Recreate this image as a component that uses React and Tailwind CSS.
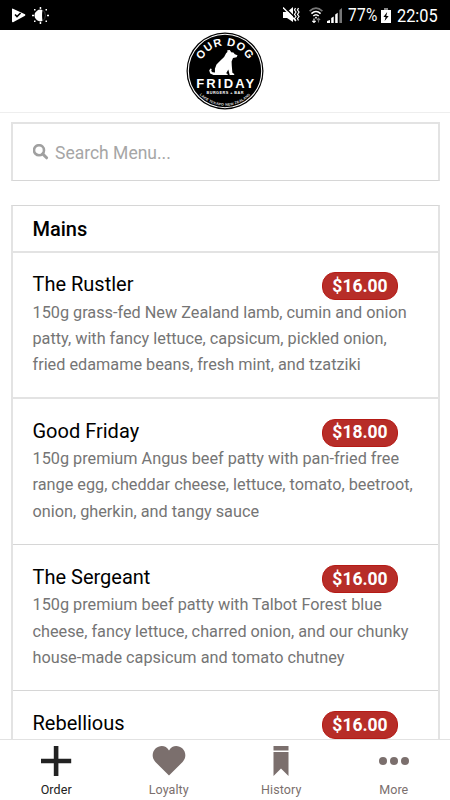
const items = [
  {
    name: 'The Rustler',
    price: '$16.00',
    lines: ['150g grass-fed New Zealand lamb, cumin and onion', 'patty, with fancy lettuce, capsicum, pickled onion,', 'fried edamame beans, fresh mint, and tzatziki'],
  },
  {
    name: 'Good Friday',
    price: '$18.00',
    lines: ['150g premium Angus beef patty with pan-fried free', 'range egg, cheddar cheese, lettuce, tomato, beetroot,', 'onion, gherkin, and tangy sauce'],
  },
  {
    name: 'The Sergeant',
    price: '$16.00',
    lines: ['150g premium beef patty with Talbot Forest blue', 'cheese, fancy lettuce, charred onion, and our chunky', 'house-made capsicum and tomato chutney'],
  },
  { name: 'Rebellious', price: '$16.00', lines: [] },
];

function StatusBar() {
  return (
    <div className="h-[30px] shrink-0 bg-black text-white flex items-center justify-between pl-3 pr-[12px]">
      <div className="flex items-center gap-[6px]">
        <svg width="14" height="15" viewBox="0 0 14 15">
          <path d="M0 1.2 Q0 .2 1 .8 L13 6.3 Q13.8 7 13 7.7 L1.5 14 Q0 14.6 0 13.3Z" fill="#fff" />
          <path d="M3 6.5 5 8.6 8.6 5" fill="none" stroke="#000" strokeWidth="1.5" />
        </svg>
        <svg width="17" height="17" viewBox="0 0 17 17" fill="#fff">
          <path d="M10.5 3 A5.9 5.9 0 1 0 10.5 14 Q9.6 8.5 10.5 3Z" />
          <path d="M10.5 3 Q13.4 4.6 13.4 8.5 Q13.4 12.4 10.5 14" fill="none" stroke="#666" strokeWidth=".6" />
          <path d="M7.7 0h1.5v2H7.7zM7.7 15h1.5v2H7.7zM0 7.8h2v1.4H0zM15 7.8h2v1.4h-2zM2 2h1.5v1.5H2zM13.5 2H15v1.5h-1.5zM2 13.5h1.5V15H2zM13.5 13.5H15V15h-1.5z" />
        </svg>
      </div>
      <div className="flex items-center">
        <svg width="17" height="16" viewBox="0 0 17 16" className="mr-[9px]">
          <path d="M0 5h4l6-5v15l-6-4H0z" fill="#fff" />
          <path d="M1 -.5 14 12.5" stroke="#000" strokeWidth="1.4" />
          <path d="M0 .5 13 14" stroke="#fff" strokeWidth="1.4" />
          <path d="M12.5 1l-1 2 1.5 2-1.5 2.5 1.5 2-1.5 2 1 2M15.5 1l-1 2 1.5 2-1.5 2.5 1.5 2-1.5 2 1 2" fill="none" stroke="#fff" strokeWidth="1.2" />
        </svg>
        <svg width="14" height="16" viewBox="0 0 14 16" className="mr-[4px]" fill="none" stroke="#fff">
          <path d="M.6 4.2Q7-1.8 13.4 4.2" stroke="#777" strokeWidth="1.6" />
          <path d="M2.4 6.6Q7 2.4 11.6 6.6M4.3 9Q7 6.5 9.7 9" strokeWidth="1.6" />
          <circle cx="7" cy="10.7" r=".9" fill="#fff" stroke="none" />
          <path d="M5 11.5v4M3.3 13.9 5 15.5l1.7-1.6" strokeWidth="1.1" />
          <path d="M9.5 15.5v-4M7.9 13l1.6-1.6 1.6 1.6" stroke="#777" strokeWidth="1.1" />
        </svg>
        <svg width="16" height="15" viewBox="0 0 16 15" className="mr-[5px]" fill="#fff">
          <path d="M0 15v-2l3-1v3zM4.2 15v-5l2.5-1.5V15zM8.2 15V6.5l2.5-1.7V15z" />
          <path d="M12.4 15V2L15 0v15z" fill="#777" />
        </svg>
        <span className="text-[18px] leading-none w-[31px] inline-flex">
          <span className="inline-block origin-left scale-x-[.86] tracking-[.4px]">77%</span>
        </span>
        <svg width="10" height="15" viewBox="0 0 10 15" className="mr-[6px] ml-[2px]">
          <path d="M3 0h4v2H3z" fill="#888" />
          <path d="M0 2h10v13H0z" fill="#fff" />
          <path d="M6.2 4 2.4 9h2.2l-1 4L7.7 8H5.3z" fill="#000" />
        </svg>
        <span className="text-[19px] leading-none w-[41px] inline-flex">
          <span className="inline-block origin-left scale-x-[.86]">22:05</span>
        </span>
      </div>
    </div>
  );
}

function Logo() {
  return (
    <svg width="78" height="78" viewBox="0 0 78 78" className="font-['Liberation_Sans',sans-serif]">
      <defs>
        <path id="arcTop" d="M13.5 39a25.5 25.5 0 0 1 51 0" />
        <path id="arcBottom" d="M4.2 39a34.8 34.8 0 0 0 69.6 0" />
      </defs>
      <circle cx="39" cy="39" r="38.5" fill="#000" />
      <circle cx="39" cy="39" r="36.7" fill="none" stroke="#fff" strokeWidth="1.1" />
      <text fill="#fff" fontSize="11" fontWeight="700" letterSpacing=".7" textAnchor="middle">
        <textPath href="#arcTop" startOffset="50%">OUR DOG</textPath>
      </text>
      <path
        d="M43.8 18l1.4 2.2 2.2.4 1.4 1.6 2.7 1.1-.9 2-3.6.7-1.4 3.4.2 4.6.6 6.8 1.9 1.2-.2 1h-4.4l-1.4-5.4-2.1 3.6 1.6.9-.3.9H32l-4.5.1-3.3-1.6-1-2.9 1.2-2 1.3.5-.5 2 1.3 1.2 2.5.2-.1-3.8 1.6-4.2 4.2-4.3 3.4-3.3 2-3.6 1.3-1.2-.1-1.9z"
        fill="#fff"
      />
      <text x="39.2" y="55.5" fill="#fff" fontSize="13" fontWeight="700" textAnchor="middle" textLength="58">FRIDAY</text>
      <text x="39" y="61.7" fill="#fff" fontSize="3.8" fontWeight="700" textAnchor="middle" textLength="37">BURGERS + BAR</text>
      <text fill="#ddd" fontSize="3.6" fontWeight="700" textAnchor="middle" letterSpacing=".15">
        <textPath href="#arcBottom" startOffset="50%">LAKE TEKAPO NEW ZEALAND</textPath>
      </text>
    </svg>
  );
}

function MenuItem({ item }) {
  return (
    <div className="h-[146.25px] border-b first-of-type:border-b-2 border-[#d6d6d6] first-of-type:border-[#e3e3e3] pt-[19.75px] pl-[19.5px] pr-5">
      <div className="h-[27px] flex items-center justify-between pr-5">
        <h3 className="text-[20px] leading-[25px] mb-[2px] text-black">{item.name}</h3>
        <span className="h-7 w-[76px] mt-px rounded-[13px] bg-[#b72d28] border border-[#b51a15] text-white text-[17.5px] font-bold flex items-center justify-center">
          {item.price}
        </span>
      </div>
      <div className="mt-[.5px] text-[16.25px] leading-[26.25px] text-[#757575] whitespace-nowrap">
        {item.lines.map((line) => <p key={line}>{line}</p>)}
      </div>
    </div>
  );
}

function Tab({ label, active, children }) {
  return (
    <div className={`flex-1 flex flex-col items-center pt-[5px] ${active ? 'text-[#222]' : 'text-[#7b6f6d]'}`}>
      <svg width="34" height="32" viewBox="0 0 34 32" fill="currentColor">{children}</svg>
      <span className="text-[12.5px] leading-[16px] mt-[5px] tracking-[.1px]">{label}</span>
    </div>
  );
}

export default function App() {
  return (
    <div className="w-[450px] h-[800px] bg-white flex flex-col overflow-hidden font-[Roboto,sans-serif]">
      <StatusBar />
      <header className="h-[83px] shrink-0 border-b border-[#eeeeee] flex justify-center pt-[2px]">
        <Logo />
      </header>

      <main className="flex-1 min-h-0 overflow-hidden pl-[11px] pr-[10px] pt-[9px]">
        <div className="h-[59px] border-2 border-b border-[#e3e3e3] border-b-[#d6d6d6] flex items-center pl-5">
          <svg width="16" height="16" viewBox="0 0 16 16" fill="none" stroke="#a0a0a0">
            <circle cx="6" cy="6.2" r="5" strokeWidth="2.6" />
            <path d="M9.7 9.9 13.6 13.8" strokeWidth="3" strokeLinecap="round" />
          </svg>
          <span className="ml-[6px] mt-[3px] text-[17.5px] text-[#a6a6a6]">Search Menu...</span>
        </div>

        <section className="mt-6 border-2 border-t border-[#e3e3e3] border-t-[#d6d6d6]">
          <h2 className="h-[46.5px] border-b-2 border-[#e3e3e3] pl-[19.5px] text-[20px] leading-[46px] font-medium text-black">Mains</h2>
          {items.map((item) => <MenuItem key={item.name} item={item} />)}
        </section>
      </main>

      <nav className="h-[61px] shrink-0 border-t border-[#e2e2e2] bg-white flex">
        <Tab label="Order" active>
          <path d="M14.8 1h4.6v12.8h12.8v4.4H19.4V31h-4.6V18.2H2v-4.4h12.8z" />
        </Tab>
        <Tab label="Loyalty">
          <path d="M17 30.5 3.4 17C-.7 12.7.2 6.8 3.5 3.5 7.5-.3 14-.2 17 5.4 20-.2 26.5-.3 30.5 3.5c3.3 3.3 4.2 9.2.1 13.5z" />
        </Tab>
        <Tab label="History">
          <path d="M9.5 1h15v4.6h-15zM9.5 7h15v24L17 23.5 9.5 31z" />
        </Tab>
        <Tab label="More">
          <circle cx="6" cy="16" r="4" />
          <circle cx="17" cy="16" r="4" />
          <circle cx="28" cy="16" r="4" />
        </Tab>
      </nav>
    </div>
  );
}
